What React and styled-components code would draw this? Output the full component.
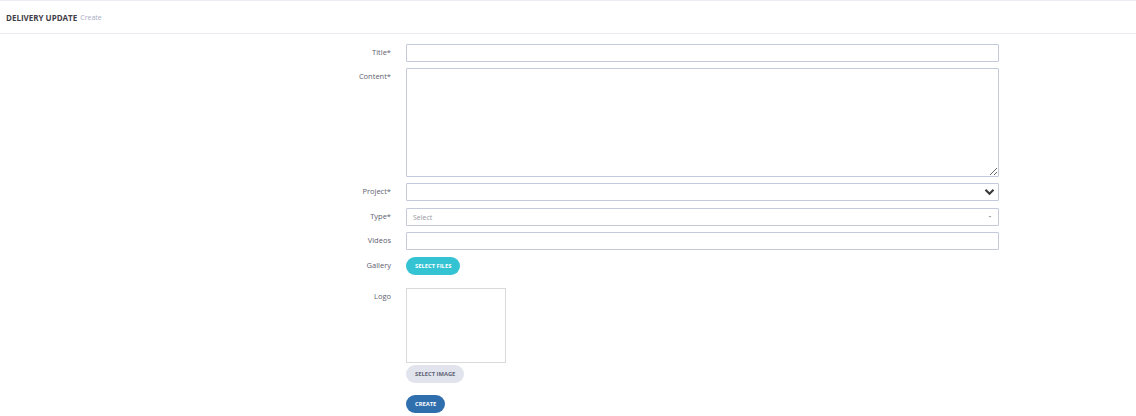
import React from "react";
import styled, { createGlobalStyle } from "styled-components";

const Global = createGlobalStyle`
  html, body { margin: 0; padding: 0; background: #fff; }
  body { font-family: "Open Sans", "Liberation Sans", sans-serif; color: #575962; }
  * { box-sizing: border-box; }
`;

const Page = styled.div`
  width: 1136px;
  min-height: 416px;
  background: #fff;
`;

const Header = styled.div`
  height: 34px;
  border-top: 1px solid #ebedf2;
  border-bottom: 1px solid #ebedf2;
  display: flex;
  align-items: center;
  padding-left: 6px;
  gap: 3px;
`;

const HeaderTitle = styled.span`
  font-size: 8px;
  font-weight: 700;
  color: #3f4047;
`;

const HeaderSub = styled.span`
  font-size: 7px;
  color: #a7abc3;
`;

const Form = styled.form`
  display: flex;
  flex-direction: column;
  padding-top: 10px;
`;

const Row = styled.div`
  display: grid;
  grid-template-columns: 391px 593px;
  column-gap: 15px;
  align-items: ${(p) => (p.$top ? "start" : "center")};
  margin-bottom: ${(p) => p.$mb ?? 7}px;
`;

const Label = styled.label`
  font-size: 7.5px;
  line-height: 10px;
  color: #5e6070;
  text-align: right;
  padding-top: ${(p) => (p.$top ? "3px" : "0")};
  margin-top: ${(p) => (p.$top ? "0" : "-2px")};
`;

const Input = styled.input`
  width: 100%;
  height: 18px;
  border: 1px solid #c4cadb;
  border-radius: 1px;
  padding: 0 6px;
  font-family: inherit;
  font-size: 7px;
  outline: none;
  background: #fff;
`;

const TextArea = styled.textarea`
  width: 100%;
  height: 109px;
  border: 1px solid #c4cadb;
  border-radius: 1px;
  font-family: inherit;
  font-size: 7px;
  display: block;
  resize: vertical;
  margin: 0;
`;

const SelectBox = styled.div`
  width: 100%;
  height: 18px;
  border: 1px solid #c4cadb;
  border-radius: 1px;
  display: flex;
  align-items: center;
  justify-content: space-between;
  padding: 0 3px 0 6px;
  font-size: 7px;
  color: #9699a2;
  background: #fff;
`;

const Pill = styled.button`
  height: 18px;
  border: none;
  border-radius: 9px;
  padding: 0 ${(p) => p.$px ?? 8}px;
  font-family: inherit;
  font-size: 5.8px;
  font-weight: 700;
  text-transform: uppercase;
  background: ${(p) => p.$bg};
  color: ${(p) => p.$fg};
  justify-self: start;
  cursor: pointer;
  line-height: 18px;
`;

const LogoCol = styled.div`
  display: flex;
  flex-direction: column;
  align-items: flex-start;
  gap: 2px;
`;

const LogoBox = styled.div`
  width: 100px;
  height: 75px;
  border: 1px solid #d9d9d9;
`;

const Spacer = styled.div``;

const Chevron = () => (
  <svg width="11" height="8" viewBox="0 0 11 8">
    <path d="M1.5 1.8 L5.5 5.8 L9.5 1.8" fill="none" stroke="#3a3a3a" strokeWidth="2.2" />
  </svg>
);

const Caret = () => (
  <svg width="10" height="6" viewBox="0 0 10 6">
    <path d="M3.5 2 L6.5 2 L5 3.6 Z" fill="#9a9a9a" />
  </svg>
);

export default function App() {
  return (
    <Page>
      <Global />
      <Header>
        <HeaderTitle>DELIVERY UPDATE</HeaderTitle>
        <HeaderSub>Create</HeaderSub>
      </Header>
      <Form onSubmit={(e) => e.preventDefault()}>
        <Row $mb={6}>
          <Label>Title*</Label>
          <Input />
        </Row>
        <Row $top $mb={6}>
          <Label $top>Content*</Label>
          <TextArea />
        </Row>
        <Row $mb={7}>
          <Label>Project*</Label>
          <SelectBox>
            <span />
            <Chevron />
          </SelectBox>
        </Row>
        <Row $mb={6}>
          <Label>Type*</Label>
          <SelectBox>
            <span>Select</span>
            <Caret />
          </SelectBox>
        </Row>
        <Row $mb={7}>
          <Label>Videos</Label>
          <Input />
        </Row>
        <Row $mb={13}>
          <Label>Gallery</Label>
          <Pill type="button" $bg="#34c3d2" $fg="#fff" $px={9}>Select Files</Pill>
        </Row>
        <Row $top $mb={12}>
          <Label $top>Logo</Label>
          <LogoCol>
            <LogoBox />
            <Pill type="button" $bg="#e1e4ec" $fg="#5f6275" $px={9}>Select Image</Pill>
          </LogoCol>
        </Row>
        <Row $mb={0}>
          <Spacer />
          <Pill type="button" $bg="#2f6fae" $fg="#fff" $px={9}>Create</Pill>
        </Row>
      </Form>
    </Page>
  );
}
